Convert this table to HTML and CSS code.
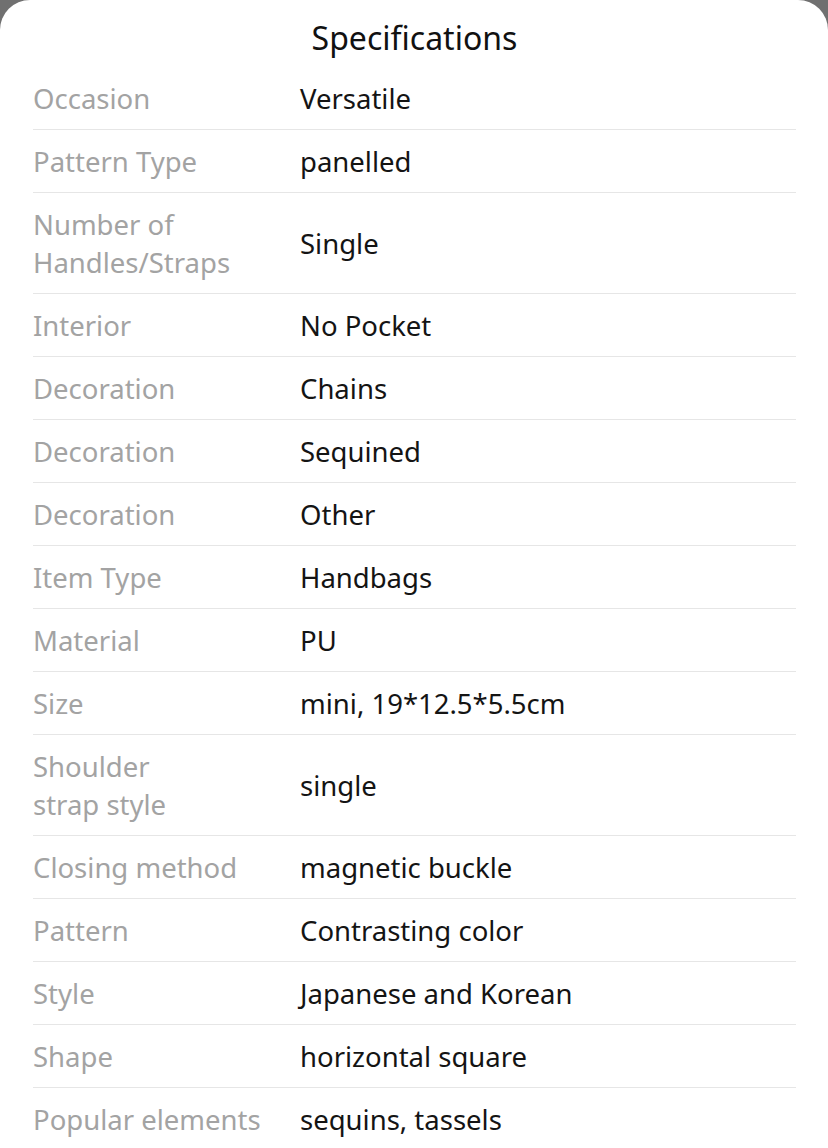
FILE: index.html
```html
<!DOCTYPE html>
<html lang="en">
<head>
<meta charset="utf-8">
<title>Specifications</title>
<link rel="stylesheet" href="styles.css">
</head>
<body>
<div class="sheet">
  <h1 class="title">Specifications</h1>
  <div class="specs">
    <div class="row"><div class="label">Occasion</div><div class="value">Versatile</div></div>
    <div class="row"><div class="label">Pattern Type</div><div class="value">panelled</div></div>
    <div class="row"><div class="label">Number of<br>Handles/Straps</div><div class="value">Single</div></div>
    <div class="row"><div class="label">Interior</div><div class="value">No Pocket</div></div>
    <div class="row"><div class="label">Decoration</div><div class="value">Chains</div></div>
    <div class="row"><div class="label">Decoration</div><div class="value">Sequined</div></div>
    <div class="row"><div class="label">Decoration</div><div class="value">Other</div></div>
    <div class="row"><div class="label">Item Type</div><div class="value">Handbags</div></div>
    <div class="row"><div class="label">Material</div><div class="value">PU</div></div>
    <div class="row"><div class="label">Size</div><div class="value">mini, 19*12.5*5.5cm</div></div>
    <div class="row"><div class="label">Shoulder<br>strap style</div><div class="value">single</div></div>
    <div class="row"><div class="label">Closing method</div><div class="value">magnetic buckle</div></div>
    <div class="row"><div class="label">Pattern</div><div class="value">Contrasting color</div></div>
    <div class="row"><div class="label">Style</div><div class="value">Japanese and Korean</div></div>
    <div class="row"><div class="label">Shape</div><div class="value">horizontal square</div></div>
    <div class="row"><div class="label">Popular elements</div><div class="value">sequins, tassels</div></div>
  </div>
</div>
</body>
</html>
```

FILE: styles.css
```css
html, body {
  margin: 0;
  padding: 0;
}
body {
  background: #707070;
  font-family: "Noto Sans", "Open Sans", sans-serif;
  overflow: hidden;
}
.sheet {
  background: #ffffff;
  border-radius: 30px 30px 0 0;
  min-height: 1148px;
  padding: 0 32px 0 33px;
  box-sizing: border-box;
}
.title {
  margin: 0;
  padding-top: 14px;
  height: 67px;
  box-sizing: border-box;
  line-height: 48px;
  font-size: 32px;
  font-weight: 400;
  color: #111111;
  text-align: center;
}
.specs {
  display: flex;
  flex-direction: column;
}
.row {
  display: grid;
  grid-template-columns: 267px 1fr;
  align-items: center;
  padding: 13px 0 11px;
  border-bottom: 1px solid #e6e6e6;
  font-size: 27.5px;
  line-height: 38px;
}
.row:last-child {
  border-bottom: none;
}
.label {
  color: #a3a3a3;
  white-space: nowrap;
}
.value {
  color: #141414;
}
```
